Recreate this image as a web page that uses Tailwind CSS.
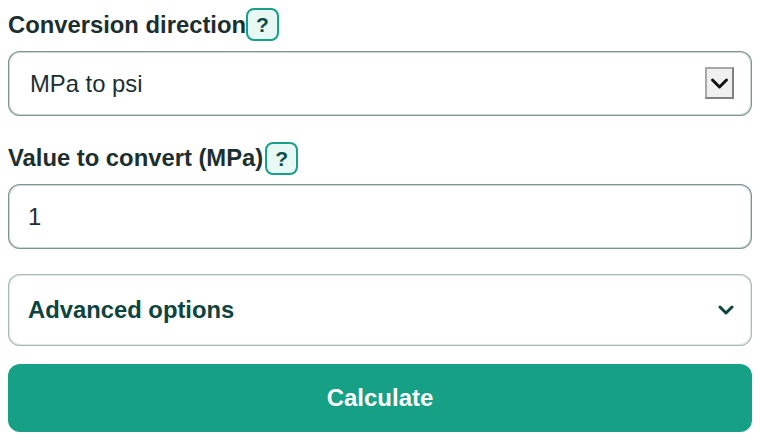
<!DOCTYPE html>
<html lang="en">
<head>
  <meta charset="UTF-8" />
  <meta name="viewport" content="width=device-width, initial-scale=1.0"/>
  <title>MPa to psi</title>
  <script src="https://cdn.jsdelivr.net/npm/@tailwindcss/browser@4"></script>
</head>
<body class="bg-white font-['Liberation_Sans',Arial,sans-serif] text-[#1c2f30]">

  <form class="flex flex-col px-2 pt-2 w-[760px]">
    <!-- Direction -->
    <div class="flex items-center h-[33px] mb-[10px]">
      <label class="text-[23.8px] font-bold leading-none">Conversion direction</label>
      <button type="button" class="w-[33px] h-[33px] rounded-lg border-2 border-[#16a085] bg-[#e8f8f5] text-[#0e4f48] text-[21px] font-bold leading-none">?</button>
    </div>
    <div class="relative h-[65px] mb-[26px]">
      <select class="w-full h-full appearance-none rounded-xl shadow-[inset_0_0_0_1px_#7f9490,inset_0_0_0_2px_#cdd7d5] bg-white pl-[22px] text-[23.8px]">
        <option>MPa to psi</option>
      </select>
      <span class="absolute right-[18px] top-[16px] w-[29px] h-[32px] flex items-center justify-center bg-[#f0f0f0] border-2 border-t-[#a8a8a8] border-l-[#a8a8a8] border-r-[#808080] border-b-[#808080] pointer-events-none">
        <svg class="w-[19px] h-[13px]" viewBox="0 0 19 13" fill="none" stroke="#111" stroke-width="3" stroke-linecap="round" stroke-linejoin="round"><path d="M2.5 3l7 7 7-7"/></svg>
      </span>
    </div>

    <!-- Value -->
    <div class="flex items-center h-[33px] mb-[9px]">
      <label class="text-[23.8px] font-bold leading-none pb-[2px]">Value to convert (MPa)</label>
      <button type="button" class="ml-[2px] w-[33px] h-[33px] rounded-lg border-2 border-[#16a085] bg-[#e8f8f5] text-[#0e4f48] text-[21px] font-bold leading-none">?</button>
    </div>
    <input type="text" value="1" class="w-full h-[65px] mb-[25px] rounded-xl shadow-[inset_0_0_0_1px_#7f9490,inset_0_0_0_2px_#cdd7d5] bg-white pl-[20px] text-[23.8px]" />

    <!-- Advanced -->
    <div class="flex items-center justify-between h-[72px] mb-[18px] rounded-xl shadow-[inset_0_0_0_1px_#a8bdb8,inset_0_0_0_2px_#dfe7e5] bg-white pl-[20px] pr-[18px]">
      <span class="text-[23.8px] font-bold text-[#0e4440]">Advanced options</span>
      <svg class="w-[16px] h-[10px]" viewBox="0 0 16 10" fill="none" stroke="#0e4440" stroke-width="3" stroke-linecap="round" stroke-linejoin="round"><path d="M2 2l6 6 6-6"/></svg>
    </div>

    <button type="button" class="w-full h-[68px] rounded-xl bg-[#16a085] text-white text-[24px] font-bold">Calculate</button>
  </form>

</body>
</html>
